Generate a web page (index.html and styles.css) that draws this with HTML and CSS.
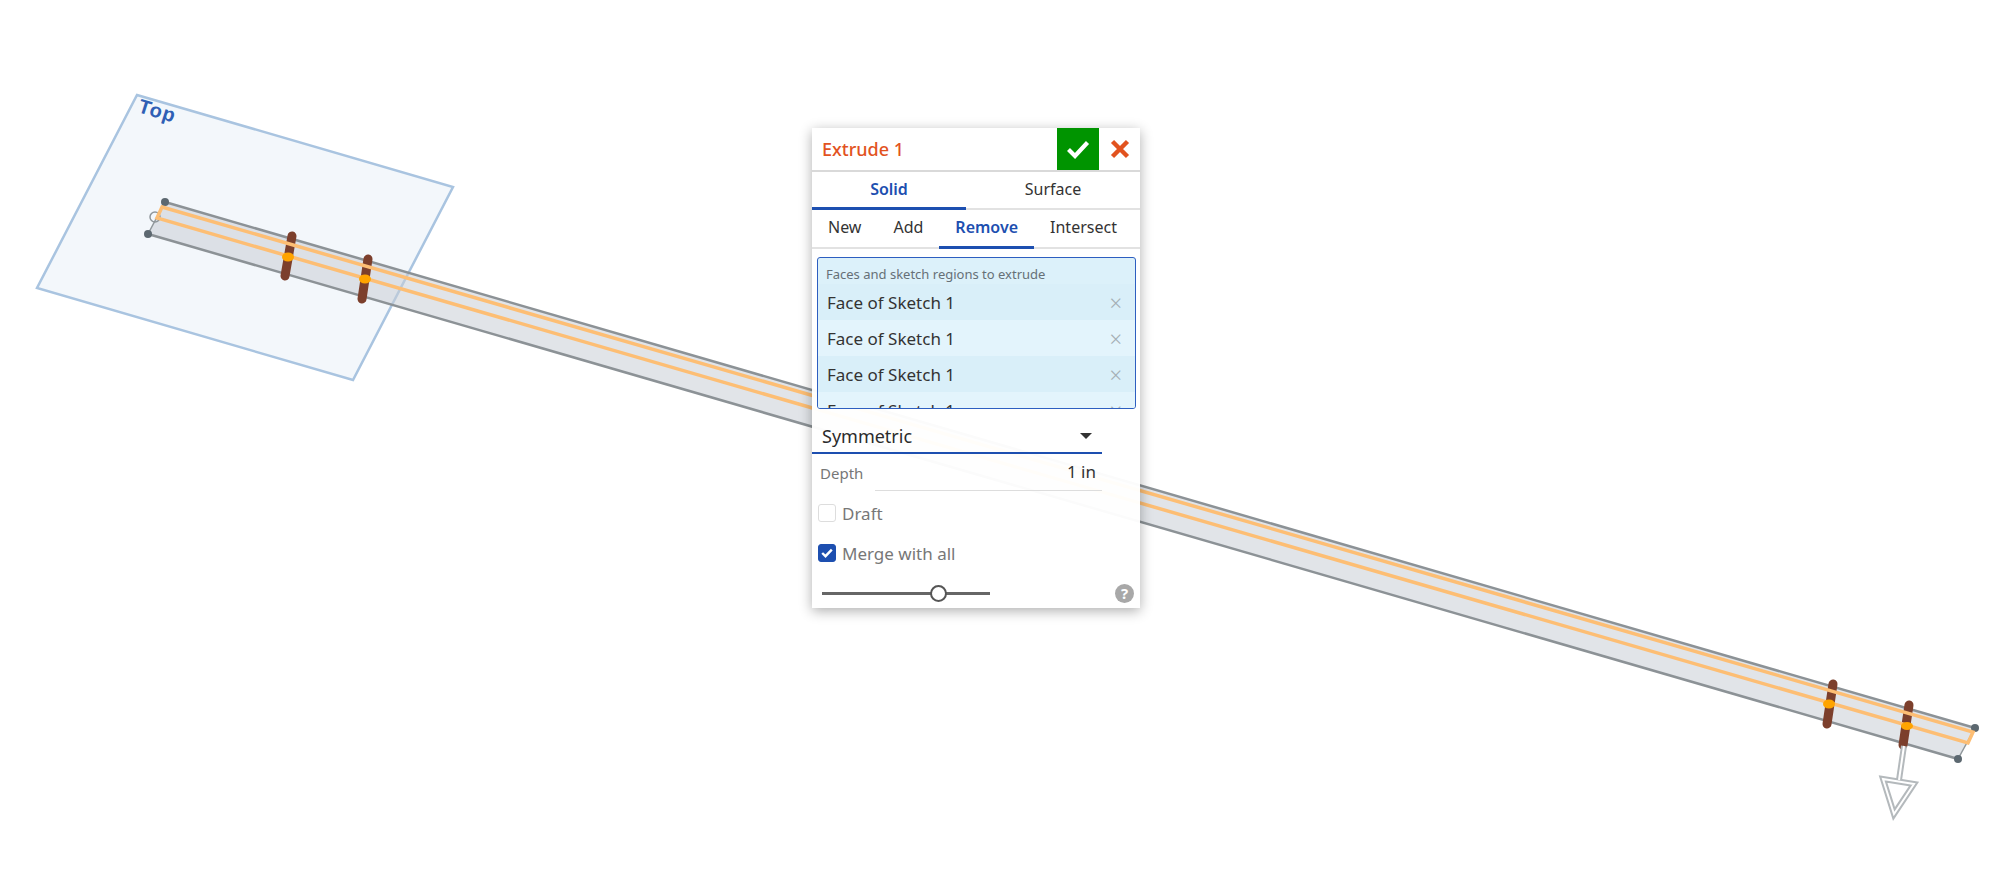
FILE: index.html
```html
<!DOCTYPE html>
<html lang="en">
<head>
    <meta charset="UTF-8">
    <meta name="viewport" content="width=device-width, initial-scale=1.0">
    <title>Extrude 1</title>
    <link rel="stylesheet" href="styles.css">
</head>
<body>
    <!-- 3D viewport -->
    <svg class="viewport" width="1999" height="882" viewBox="0 0 1999 882">
        <!-- Top plane -->
        <polygon class="plane" points="137,95 453,187 353,380 37,288"/>
        <text class="plane-label" transform="matrix(0.96 0.28 -0.3 0.95 137 112)">Top</text>

        <!-- Bar -->
        <polygon class="bar" points="165,202 1975,728 1958,759 148,234"/>
        <line class="bar-end" x1="165" y1="202" x2="148" y2="234"/>
        <line class="bar-end" x1="1975" y1="728" x2="1958" y2="759"/>
        <line class="bar-edge" x1="165" y1="202" x2="1975" y2="728"/>
        <line class="bar-edge" x1="148" y1="234" x2="1958" y2="759"/>
        <circle class="open-dot" cx="155" cy="217" r="5"/>
        <circle class="dot" cx="165" cy="202" r="4"/>
        <circle class="dot" cx="148" cy="234" r="4"/>
        <circle class="dot" cx="1975" cy="728" r="4"/>
        <circle class="dot" cx="1958" cy="759" r="4"/>

        <!-- Cross ties -->
        <line class="tie" x1="292" y1="236" x2="285" y2="276"/>
        <line class="tie" x1="368" y1="259" x2="362" y2="299"/>
        <line class="tie" x1="1833" y1="684" x2="1827" y2="724"/>
        <line class="tie" x1="1909" y1="705" x2="1903" y2="745"/>

        <!-- Sketch region -->
        <polygon class="region" points="162,207 1973,732 1968,743 157,218"/>
        <ellipse class="blob" cx="288" cy="257" rx="6" ry="4.5"/>
        <ellipse class="blob" cx="365" cy="279" rx="6" ry="4.5"/>
        <ellipse class="blob" cx="1829" cy="704" rx="6" ry="4.5"/>
        <ellipse class="blob" cx="1907" cy="726" rx="6" ry="4"/>

        <!-- Direction arrow -->
        <g class="arrow-out">
            <line x1="1904" y1="746" x2="1899" y2="780"/>
            <polygon points="1883,779 1914,784 1894,814"/>
        </g>
        <g class="arrow-in">
            <line x1="1904" y1="746" x2="1899" y2="780"/>
            <polygon points="1883,779 1914,784 1894,814"/>
        </g>
    </svg>

    <!-- Feature dialog -->
    <div class="dialog">
        <div class="dialog-header">
            <span class="dialog-title">Extrude 1</span>
            <button class="btn-ok">
                <svg width="24" height="20" viewBox="0 0 24 20"><path d="M2.5 10.5 L9 17 L21.5 3.5" fill="none" stroke="#fff" stroke-width="4.2"/></svg>
            </button>
            <button class="btn-cancel">
                <svg width="20" height="20" viewBox="0 0 20 20"><path d="M2.5 2.5 L17.5 17.5 M17.5 2.5 L2.5 17.5" fill="none" stroke="#e2531f" stroke-width="4.4"/></svg>
            </button>
        </div>

        <div class="tabs body-tabs">
            <div class="tab tab-solid active">Solid</div>
            <div class="tab tab-surface">Surface</div>
        </div>

        <div class="tabs op-tabs">
            <div class="tab">New</div>
            <div class="tab">Add</div>
            <div class="tab active">Remove</div>
            <div class="tab">Intersect</div>
        </div>

        <div class="query-list">
            <div class="query-label">Faces and sketch regions to extrude</div>
            <div class="query-row"><span>Face of Sketch 1</span><i class="query-x">×</i></div>
            <div class="query-row"><span>Face of Sketch 1</span><i class="query-x">×</i></div>
            <div class="query-row"><span>Face of Sketch 1</span><i class="query-x">×</i></div>
            <div class="query-row"><span>Face of Sketch 1</span><i class="query-x">×</i></div>
        </div>

        <div class="select">
            <span>Symmetric</span>
            <span class="caret"></span>
        </div>

        <div class="depth-row">
            <span class="depth-label">Depth</span>
            <span class="depth-value">1 in</span>
        </div>

        <div class="check-row">
            <span class="checkbox"></span>
            <span>Draft</span>
        </div>

        <div class="check-row merge-row">
            <span class="checkbox checked">
                <svg width="12" height="10" viewBox="0 0 12 10"><path d="M1.2 5 L4.5 8.2 L10.8 1.6" fill="none" stroke="#fff" stroke-width="2.4"/></svg>
            </span>
            <span>Merge with all</span>
        </div>

        <div class="dialog-footer">
            <div class="slider"><span class="slider-knob"></span></div>
            <span class="help">?</span>
        </div>
    </div>
</body>
</html>
```

FILE: styles.css
```css
/* General Styling */
body {
    font-family: "Noto Sans", "Open Sans", sans-serif;
    background-color: #fff;
    color: #333;
    margin: 0;
    width: 1999px;
    height: 882px;
    overflow: hidden;
    position: relative;
}

/* Viewport drawing */
.viewport {
    position: absolute;
    left: 0;
    top: 0;
}

.plane {
    fill: #f3f7fb;
    stroke: #a9c4e0;
    stroke-width: 2.5;
}

.plane-label {
    font-family: "Liberation Sans", sans-serif;
    font-size: 20px;
    font-weight: 700;
    fill: #2f5fb5;
    letter-spacing: 1px;
}

.bar {
    fill: #c9ced5;
    fill-opacity: 0.55;
}

.bar-edge {
    stroke: #8c9296;
    stroke-width: 2.5;
}

.bar-end {
    stroke: #8f969a;
    stroke-width: 1.5;
}

.dot {
    fill: #5c6870;
}

.open-dot {
    fill: none;
    stroke: #8f969a;
    stroke-width: 1.5;
}

.tie {
    stroke: #7c3f2c;
    stroke-width: 9;
    stroke-linecap: round;
}

.region {
    fill: none;
    stroke: #fdbe74;
    stroke-width: 3.5;
}

.blob {
    fill: #ffa400;
}

.arrow-out line,
.arrow-out polygon {
    fill: none;
    stroke: #b4b9bc;
    stroke-width: 6;
}

.arrow-in line,
.arrow-in polygon {
    fill: none;
    stroke: #fff;
    stroke-width: 2;
}

/* Dialog */
.dialog {
    position: absolute;
    left: 812px;
    top: 128px;
    width: 328px;
    height: 480px;
    background-color: rgba(255, 255, 255, 0.96);
    box-shadow: 0 3px 12px rgba(0, 0, 0, 0.32);
}

.dialog-header {
    display: flex;
    align-items: center;
    height: 42px;
    background-color: #fff;
    border-bottom: 2px solid #d9d9d9;
}

.dialog-title {
    flex: 1;
    padding-left: 10px;
    font-size: 18px;
    font-weight: 500;
    color: #e2531f;
}

.btn-ok,
.btn-cancel {
    display: flex;
    align-items: center;
    justify-content: center;
    height: 42px;
    padding: 0;
    border: 0;
}

.btn-ok {
    width: 42px;
    background-color: #009400;
}

.btn-cancel {
    width: 41px;
    background-color: #fff;
}

/* Tabs */
.tabs {
    display: flex;
    background-color: #fff;
    border-bottom: 2px solid #e2e2e2;
}

.body-tabs {
    height: 36px;
}

.op-tabs {
    height: 37px;
}

.tab {
    box-sizing: border-box;
    height: calc(100% + 2px);
    padding: 0 16px;
    font-size: 16px;
    line-height: 34px;
    text-align: center;
    color: #333;
    border-bottom: 3px solid transparent;
}

.tab.active {
    font-weight: 600;
    color: #1d4fb0;
    border-bottom-color: #1d4fb0;
}

.tab-solid {
    width: 154px;
}

.tab-surface {
    width: 174px;
}

/* Selection list */
.query-list {
    box-sizing: border-box;
    height: 152px;
    margin: 8px 4px 0 5px;
    border: 1.5px solid #2d5ec0;
    border-radius: 3px;
    background-color: #dcf1fa;
    overflow: hidden;
}

.query-label {
    height: 26px;
    padding: 6px 0 0 8px;
    box-sizing: border-box;
    font-size: 13px;
    line-height: 20px;
    color: #667077;
}

.query-row {
    display: flex;
    align-items: center;
    justify-content: space-between;
    flex-shrink: 0;
    height: 36px;
    padding: 0 13px 0 9px;
    font-size: 17px;
    color: #333;
    background-color: #d9eff9;
}

.query-row:nth-child(odd) {
    background-color: #e3f4fc;
}

.query-x {
    font-style: normal;
    font-size: 22px;
    font-weight: 300;
    color: #a4aeb4;
}

/* Form rows */
.select {
    display: flex;
    align-items: center;
    justify-content: space-between;
    box-sizing: border-box;
    width: 290px;
    height: 35px;
    margin-top: 10px;
    padding: 0 10px 0 10px;
    font-size: 18px;
    color: #2b2b2b;
    border-bottom: 2px solid #1d4fb0;
}

.caret {
    width: 0;
    height: 0;
    border-left: 6px solid transparent;
    border-right: 6px solid transparent;
    border-top: 6px solid #333;
}

.depth-row {
    display: flex;
    align-items: center;
    width: 290px;
    height: 37px;
}

.depth-label {
    width: 63px;
    padding-left: 8px;
    box-sizing: border-box;
    font-size: 15px;
    color: #777;
}

.depth-value {
    flex: 1;
    height: 36px;
    line-height: 36px;
    padding-right: 6px;
    text-align: right;
    font-size: 17px;
    color: #333;
    border-bottom: 1px solid #ddd;
}

.check-row {
    display: flex;
    align-items: center;
    gap: 6px;
    height: 28px;
    margin-top: 8px;
    padding-left: 6px;
    font-size: 17px;
    color: #777;
}

.merge-row {
    margin-top: 12px;
}

.checkbox {
    display: flex;
    align-items: center;
    justify-content: center;
    box-sizing: border-box;
    width: 18px;
    height: 18px;
    border: 1.5px solid #ddd;
    border-radius: 3px;
    background-color: #fff;
}

.checkbox.checked {
    border-color: #1d4fb0;
    background-color: #1d4fb0;
}

/* Footer */
.dialog-footer {
    display: flex;
    align-items: center;
    justify-content: space-between;
    height: 28px;
    margin-top: 12px;
    padding: 0 6px 0 10px;
}

.slider {
    position: relative;
    width: 168px;
    height: 3px;
    background-color: #666;
}

.slider-knob {
    position: absolute;
    left: 108px;
    top: -7px;
    box-sizing: border-box;
    width: 17px;
    height: 17px;
    border: 2px solid #555;
    border-radius: 50%;
    background-color: #fff;
}

.help {
    width: 19px;
    height: 19px;
    border-radius: 50%;
    background-color: #a8a8a8;
    color: #fff;
    font-size: 15px;
    font-weight: 700;
    line-height: 19px;
    text-align: center;
}
```
